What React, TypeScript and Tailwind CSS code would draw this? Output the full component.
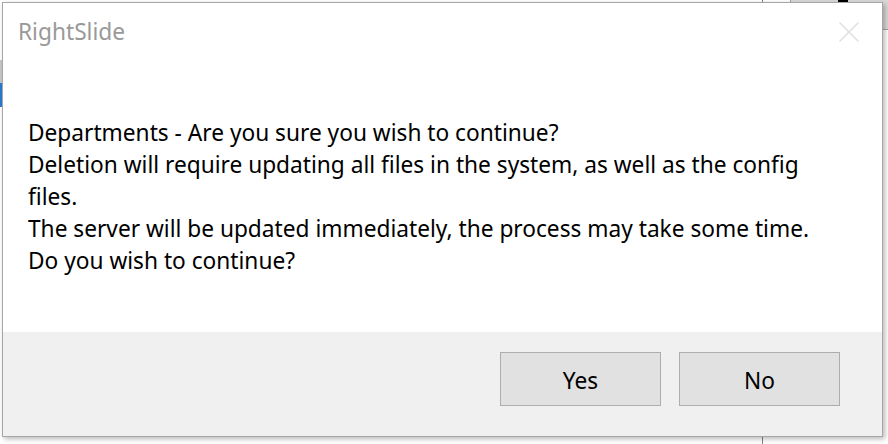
const lines = [
    'Departments - Are you sure you wish to continue?',
    'Deletion will require updating all files in the system, as well as the config',
    'files.',
    'The server will be updated immediately, the process may take some time.',
    'Do you wish to continue?',
];

function DialogButton({ label }: { label: string }) {
    return (
        <button className="w-[161px] h-[54px] pt-[4px] bg-[#e1e1e1] border border-[#adadad] text-[22.7px] text-black">
            {label}
        </button>
    );
}

function CloseIcon() {
    return (
        <svg width="20" height="20" viewBox="0 0 20 20" className="block">
            <path d="M0.5 0.5 19.5 19.5M19.5 0.5 0.5 19.5" stroke="#dedede" strokeWidth="1.4" fill="none" />
        </svg>
    );
}

export default function App() {
    return (
        <div
            className="relative w-[888px] h-[444px] bg-white overflow-hidden"
            style={{ fontFamily: '"Noto Sans", "Open Sans", sans-serif' }}
        >
            {/* bits of the window behind the dialog */}
            <div className="absolute top-0 left-[790px] w-[98px] h-[30px] bg-[#d9d9d9] border-l border-b border-[#a0a0a0]" />
            <div className="absolute top-0 left-[762px] w-px h-[4px] bg-[#808080]" />
            <div className="absolute bottom-0 left-[762px] w-px h-[7px] bg-[#808080]" />
            <div className="absolute top-0 left-[838px] w-[10px] h-[3px] bg-black" />
            <div className="absolute top-[60px] left-0 w-[2px] h-[23px] bg-[#c8c8c8]" />
            <div className="absolute top-[83px] left-0 w-[2px] h-[24px] bg-[#2b7bd6]" />

            {/* Dialog */}
            <div className="relative ml-[2px] mt-[2px] w-[881px] h-[435px] flex flex-col bg-white border border-[#a6a6a6] shadow-[2px_2px_5px_rgba(0,0,0,0.28)]">
                <div className="h-[57px] flex items-center justify-between pl-[15px] pr-[23px]">
                    <span className="text-[22.7px] text-[#999999] leading-none mt-[1px]">RightSlide</span>
                    <CloseIcon />
                </div>
                <div className="flex-1 pl-[25px] pt-[57px]">
                    {lines.map(l => (
                        <div key={l} className="text-[22.7px] leading-[32px] text-black whitespace-nowrap">{l}</div>
                    ))}
                </div>
                <div className="h-[104px] bg-[#f0f0f0] flex justify-end gap-[18px] pt-[20px] pr-[42px]">
                    <DialogButton label="Yes" />
                    <DialogButton label="No" />
                </div>
            </div>
        </div>
    );
}
